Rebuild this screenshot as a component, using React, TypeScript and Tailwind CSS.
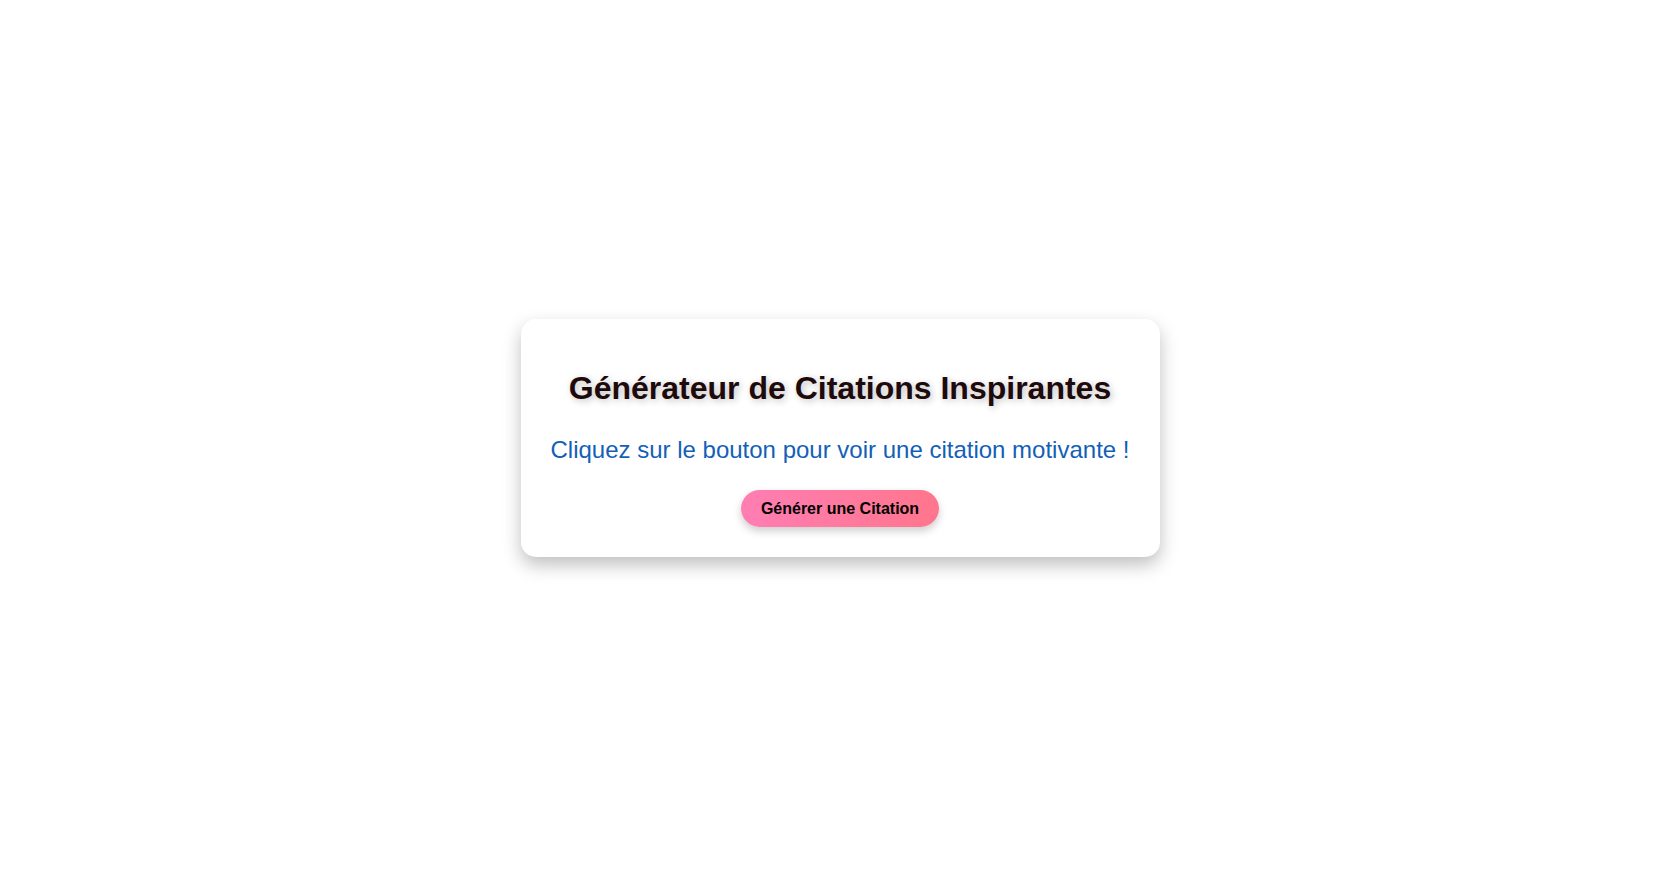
import React, { useState } from "react";

const QUOTES = [
  "La vie, c'est comme une bicyclette, il faut avancer pour ne pas perdre l'équilibre.",
  "Le succès n'est pas final, l'échec n'est pas fatal : c'est le courage de continuer qui compte.",
  "Crois en toi et tout devient possible.",
  "Chaque jour est une nouvelle chance de changer ta vie.",
];

export default function App() {
  const [quote, setQuote] = useState<string | null>(null);

  const nextQuote = () => {
    setQuote(QUOTES[Math.floor(Math.random() * QUOTES.length)]);
  };

  return (
    <div className="min-h-screen flex items-center justify-center bg-white font-['Liberation_Sans',Arial,sans-serif]">
      <div className="flex flex-col items-center text-center bg-white rounded-[15px] p-[30px] shadow-[0_8px_18px_rgba(0,0,0,0.25)]">
        <h1 className="mt-[21px] text-[32px] leading-[1.15] font-bold text-[#1e0a0b] [text-shadow:2px_2px_7px_rgba(0,0,0,0.25)]">
          Générateur de Citations Inspirantes
        </h1>
        <p className="mt-[30px] mb-[26px] text-[24px] leading-[1.15] text-[#135fb8]">
          {quote ?? "Cliquez sur le bouton pour voir une citation motivante !"}
        </p>
        <button
          onClick={nextQuote}
          className="px-[20px] py-[9.5px] rounded-full text-[16px] leading-[1.15] font-bold text-black bg-gradient-to-r from-[#ff7eb3] to-[#ff758c] shadow-[0_4px_8px_rgba(0,0,0,0.2)] cursor-pointer"
        >
          Générer une Citation
        </button>
      </div>
    </div>
  );
}
